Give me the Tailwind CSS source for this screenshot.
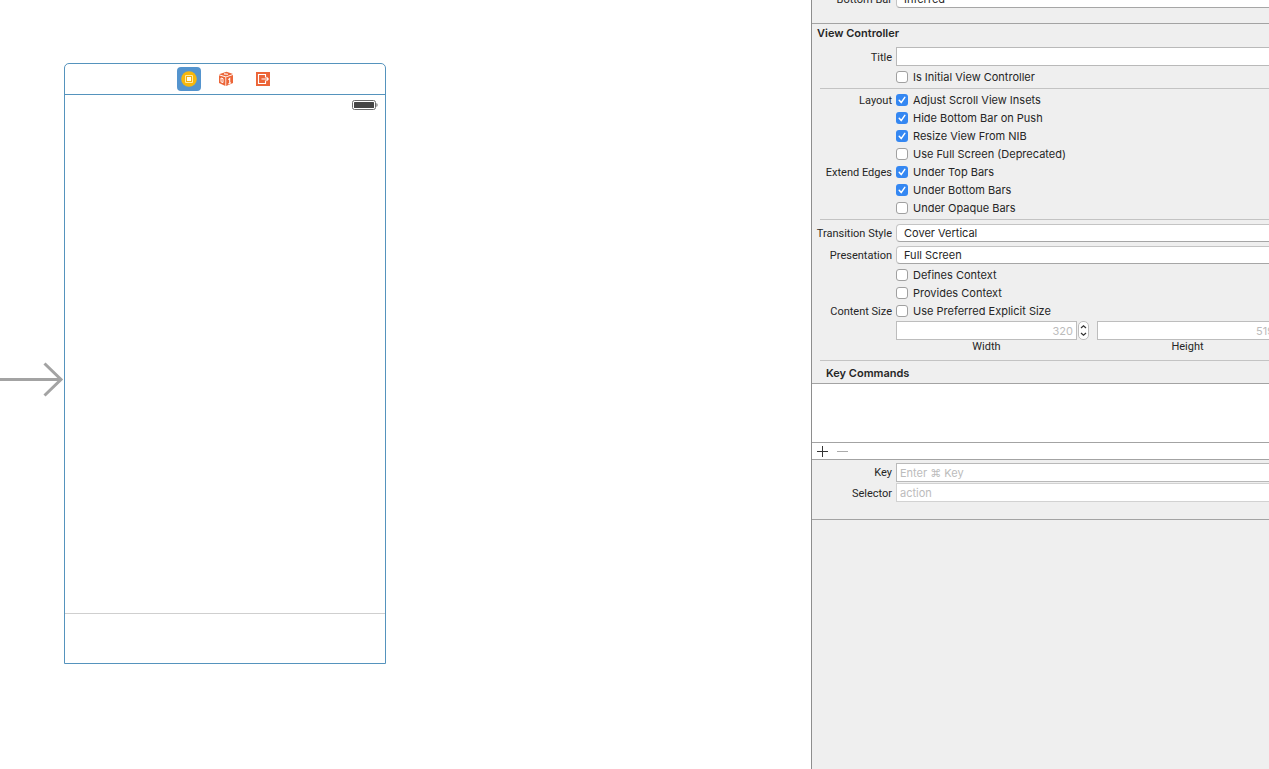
<!DOCTYPE html>
<html lang="en">
<head>
<meta charset="utf-8">
<title>View Controller Inspector</title>
<script src="https://cdn.jsdelivr.net/npm/@tailwindcss/browser@4"></script>
</head>
<body class="flex h-screen overflow-hidden bg-white font-['Inter','DejaVu_Sans',sans-serif] text-[11px] leading-[18px] text-[#262626]">
<svg class="hidden" aria-hidden="true">
  <symbol id="tick" viewBox="0 0 12 12"><path d="M3.2 6.3 5.2 8.6 8.8 3.4" fill="none" stroke="#fff" stroke-width="1.5" stroke-linecap="round" stroke-linejoin="round"/></symbol>
</svg>

<main class="flex min-w-0 flex-1 items-start pt-[63px]">
  <svg class="mt-[299px] h-9 w-16 shrink-0" viewBox="0 0 64 36" fill="none" stroke="#a3a3a3" stroke-width="3" aria-label="Initial view controller"><path d="M0 17.500H61M44.500 1.500 61 17.500 44.500 33.500"/></svg>
  <section class="flex h-[601px] w-[322px] shrink-0 flex-col rounded-t-[5px] border border-[#5593bd]">
    <header class="flex h-[31px] items-center justify-center gap-[13px] border-b border-[#5593bd] pl-[1px]">
      <button class="grid size-6 place-items-center rounded-[4px] bg-[#5494ce]" aria-label="View Controller">
        <svg class="size-4" viewBox="0 0 16 16"><circle cx="8" cy="8" r="7.800" fill="#f6b70c"/><path d="M4.500 4.500h7v7h-7z" fill="#f0ae0a" stroke="#ffe9a6" stroke-width="1"/><path d="M6 6h4v4H6z" fill="#fffbe8"/></svg>
      </button>
      <button class="grid size-6 place-items-center" aria-label="First Responder">
        <svg class="size-4" viewBox="0 0 16 16"><path d="M8.500.8 15 3 8 5.400 1 3.300z" fill="#ec6538"/><path d="M1 4.200 7.400 6.200V15L1 12z" fill="#ec6538"/><path d="M8.200 6.200 15 4v8L8.200 15z" fill="#ec6538"/><path d="M3 7v3.800l2 .8V7.700z" fill="none" stroke="#fff"/><path d="M10.300 8.600 11.700 7.500V12.500M10.300 12.900 13 11.800M6 2.900 10 3.200" fill="none" stroke="#fff" stroke-width="1.100"/></svg>
      </button>
      <button class="grid size-6 place-items-center" aria-label="Exit">
        <svg class="size-[14px]" viewBox="0 0 14 14"><path d="M0 0h14v14H0z" fill="#ec6538"/><path d="M9.500 5.500v-3h-7v9h7v-3M5.500 7h6.500M10.500 5 12.300 7l-1.800 2" fill="none" stroke="#fff" stroke-width="1.100"/></svg>
      </button>
    </header>
    <div class="flex flex-1 justify-end pt-[4px] pr-[7px]">
      <svg class="h-[11px] w-[26px]" viewBox="0 0 26 11" aria-label="Battery"><rect x=".5" y="1.500" width="23" height="9" rx="2" fill="#fff" stroke="#6b6b6b"/><rect x="2" y="3" width="20" height="6" rx=".5" fill="#454545"/><path d="M24.500 4v4q1-.5 1-2t-1-2z" fill="#555"/></svg>
    </div>
    <footer class="h-[50px] border-t border-[#cfcfcf]"></footer>
  </section>
</main>

<aside class="w-[458px] shrink-0 overflow-hidden border-l border-[#8e8e8e] bg-[#efefef]">
  <form class="w-[484px]">
    <div class="-mt-[10px] flex h-[33px] items-start gap-1">
      <label for="bottombar" class="h-[18px] w-20 shrink-0 text-right font-['Roboto',sans-serif] leading-5">Bottom Bar</label>
      <select id="bottombar" class="h-[18px] flex-1 appearance-none rounded-[4px] border border-[#c4c4c4] border-b-[#a6a6a6] bg-white pl-[7px] leading-4"><option>Inferred</option></select>
    </div>

    <section class="border-t border-[#a3a3a3]">
      <h2 class="h-[23px] pl-[5px] font-semibold">View Controller</h2>
      <div class="flex gap-1">
        <label for="title" class="h-[18px] w-20 shrink-0 pt-[1px] text-right font-['Roboto',sans-serif] leading-5">Title</label>
        <input id="title" type="text" class="h-[19px] flex-1 border border-[#b9b9b9] bg-white px-1">
      </div>
      <label class="mt-[2px] flex h-[18px] items-center pl-[84px]"><span class="mr-[5px] grid size-3"><input type="checkbox" class="col-start-1 row-start-1 size-3 appearance-none rounded-[3px] border border-[#a0a0a0] bg-white"></span>Is Initial View Controller</label>
      <hr class="mt-[2px] mb-[2px] ml-2 border-[#c3c3c3]">

      <fieldset class="flex gap-1">
        <legend class="float-left h-[18px] w-20 shrink-0 text-right font-['Roboto',sans-serif] leading-5">Layout</legend>
        <div class="flex flex-col">
          <label class="flex h-[18px] items-center"><span class="mr-[5px] grid size-3"><input type="checkbox" checked class="col-start-1 row-start-1 size-3 appearance-none rounded-[3px] bg-[#3487f2]"><svg class="pointer-events-none col-start-1 row-start-1 size-3"><use href="#tick"/></svg></span>Adjust Scroll View Insets</label>
          <label class="flex h-[18px] items-center"><span class="mr-[5px] grid size-3"><input type="checkbox" checked class="col-start-1 row-start-1 size-3 appearance-none rounded-[3px] bg-[#3487f2]"><svg class="pointer-events-none col-start-1 row-start-1 size-3"><use href="#tick"/></svg></span>Hide Bottom Bar on Push</label>
          <label class="flex h-[18px] items-center"><span class="mr-[5px] grid size-3"><input type="checkbox" checked class="col-start-1 row-start-1 size-3 appearance-none rounded-[3px] bg-[#3487f2]"><svg class="pointer-events-none col-start-1 row-start-1 size-3"><use href="#tick"/></svg></span>Resize View From NIB</label>
          <label class="flex h-[18px] items-center"><span class="mr-[5px] grid size-3"><input type="checkbox" class="col-start-1 row-start-1 size-3 appearance-none rounded-[3px] border border-[#a0a0a0] bg-white"></span>Use Full Screen (Deprecated)</label>
        </div>
      </fieldset>
      <fieldset class="flex gap-1">
        <legend class="float-left h-[18px] w-20 shrink-0 text-right font-['Roboto',sans-serif] leading-5">Extend Edges</legend>
        <div class="flex flex-col">
          <label class="flex h-[18px] items-center"><span class="mr-[5px] grid size-3"><input type="checkbox" checked class="col-start-1 row-start-1 size-3 appearance-none rounded-[3px] bg-[#3487f2]"><svg class="pointer-events-none col-start-1 row-start-1 size-3"><use href="#tick"/></svg></span>Under Top Bars</label>
          <label class="flex h-[18px] items-center"><span class="mr-[5px] grid size-3"><input type="checkbox" checked class="col-start-1 row-start-1 size-3 appearance-none rounded-[3px] bg-[#3487f2]"><svg class="pointer-events-none col-start-1 row-start-1 size-3"><use href="#tick"/></svg></span>Under Bottom Bars</label>
          <label class="flex h-[18px] items-center"><span class="mr-[5px] grid size-3"><input type="checkbox" class="col-start-1 row-start-1 size-3 appearance-none rounded-[3px] border border-[#a0a0a0] bg-white"></span>Under Opaque Bars</label>
        </div>
      </fieldset>
      <hr class="mt-[2px] mb-[4px] ml-2 border-[#c3c3c3]">

      <div class="flex gap-1">
        <label for="transition" class="h-[18px] w-20 shrink-0 text-right whitespace-nowrap font-['Roboto',sans-serif] leading-5">Transition Style</label>
        <select id="transition" class="h-[18px] flex-1 appearance-none rounded-[4px] border border-[#c4c4c4] border-b-[#a6a6a6] bg-white pl-[7px] leading-4"><option>Cover Vertical</option></select>
      </div>
      <div class="mt-1 flex gap-1">
        <label for="presentation" class="h-[18px] w-20 shrink-0 text-right font-['Roboto',sans-serif] leading-5">Presentation</label>
        <select id="presentation" class="h-[18px] flex-1 appearance-none rounded-[4px] border border-[#c4c4c4] border-b-[#a6a6a6] bg-white pl-[7px] leading-4"><option>Full Screen</option></select>
      </div>
      <label class="mt-[2px] flex h-[18px] items-center pl-[84px]"><span class="mr-[5px] grid size-3"><input type="checkbox" class="col-start-1 row-start-1 size-3 appearance-none rounded-[3px] border border-[#a0a0a0] bg-white"></span>Defines Context</label>
      <label class="flex h-[18px] items-center pl-[84px]"><span class="mr-[5px] grid size-3"><input type="checkbox" class="col-start-1 row-start-1 size-3 appearance-none rounded-[3px] border border-[#a0a0a0] bg-white"></span>Provides Context</label>
      <fieldset class="flex gap-1">
        <legend class="float-left h-[18px] w-20 shrink-0 text-right font-['Roboto',sans-serif] leading-5">Content Size</legend>
        <div>
          <label class="flex h-[18px] items-center"><span class="mr-[5px] grid size-3"><input type="checkbox" class="col-start-1 row-start-1 size-3 appearance-none rounded-[3px] border border-[#a0a0a0] bg-white"></span>Use Preferred Explicit Size</label>
          <div class="mt-[1px] flex gap-2">
            <div class="grid grid-cols-[181px_11px] gap-x-[1px]">
              <input id="width" type="text" value="320" disabled class="h-[19px] w-full border border-[#bdbdbd] bg-white pr-[3px] text-right text-[#bcbcbc]">
              <button type="button" class="grid h-[19px] place-items-center rounded-[5px] border border-[#bdbdbd] bg-white" aria-label="Adjust width"><svg class="h-[13px] w-[7px]" viewBox="0 0 7 13" fill="none" stroke="#333" stroke-width="1.200"><path d="M1 4 3.500 1.700 6 4M1 9 3.500 11.300 6 9"/></svg></button>
              <label for="width" class="text-center font-['Roboto',sans-serif] leading-[14px]">Width</label>
            </div>
            <div class="grid grid-cols-[181px_11px] gap-x-[1px]">
              <input id="height" type="text" value="519" disabled class="h-[19px] w-full border border-[#bdbdbd] bg-white pr-[3px] text-right text-[#bcbcbc]">
              <button type="button" class="grid h-[19px] place-items-center rounded-[5px] border border-[#bdbdbd] bg-white" aria-label="Adjust height"><svg class="h-[13px] w-[7px]" viewBox="0 0 7 13" fill="none" stroke="#333" stroke-width="1.200"><path d="M1 4 3.500 1.700 6 4M1 9 3.500 11.300 6 9"/></svg></button>
              <label for="height" class="text-center font-['Roboto',sans-serif] leading-[14px]">Height</label>
            </div>
          </div>
        </div>
      </fieldset>
      <hr class="mt-[6px] ml-2 border-[#c3c3c3]">
    </section>

    <section class="border-b border-[#a3a3a3] pb-[17px]">
      <h3 class="h-[22px] pt-[3px] pl-[14px] font-semibold">Key Commands</h3>
      <div class="h-[60px] border-y border-[#a3a3a3] bg-white"></div>
      <div class="flex h-[17px] items-center gap-2 border-b border-[#a3a3a3] bg-white pl-[5px]">
        <button type="button" class="size-3" aria-label="Add"><svg class="size-[11px]" viewBox="0 0 11 11" stroke="#333"><path d="M0 5.500h11M5.500 0v11"/></svg></button>
        <button type="button" class="size-3" aria-label="Remove"><svg class="size-[11px]" viewBox="0 0 11 11" stroke="#ababab"><path d="M0 5.500h11"/></svg></button>
      </div>
      <div class="mt-[3px] flex gap-1">
        <label for="key" class="h-[18px] w-20 shrink-0 text-right font-['Roboto',sans-serif] leading-5">Key</label>
        <input id="key" type="text" placeholder="Enter ⌘ Key" class="h-[19px] flex-1 border border-[#b9b9b9] bg-white pl-[3px] placeholder:text-[#bcbcbc]">
      </div>
      <div class="mt-[1px] flex gap-1">
        <label for="selector" class="h-[18px] w-20 shrink-0 pt-[1px] text-right font-['Roboto',sans-serif] leading-5">Selector</label>
        <input id="selector" type="text" placeholder="action" class="h-[19px] flex-1 border border-[#d2d2d2] bg-white pl-[3px] placeholder:text-[#bcbcbc]">
      </div>
    </section>
  </form>
</aside>
</body>
</html>
